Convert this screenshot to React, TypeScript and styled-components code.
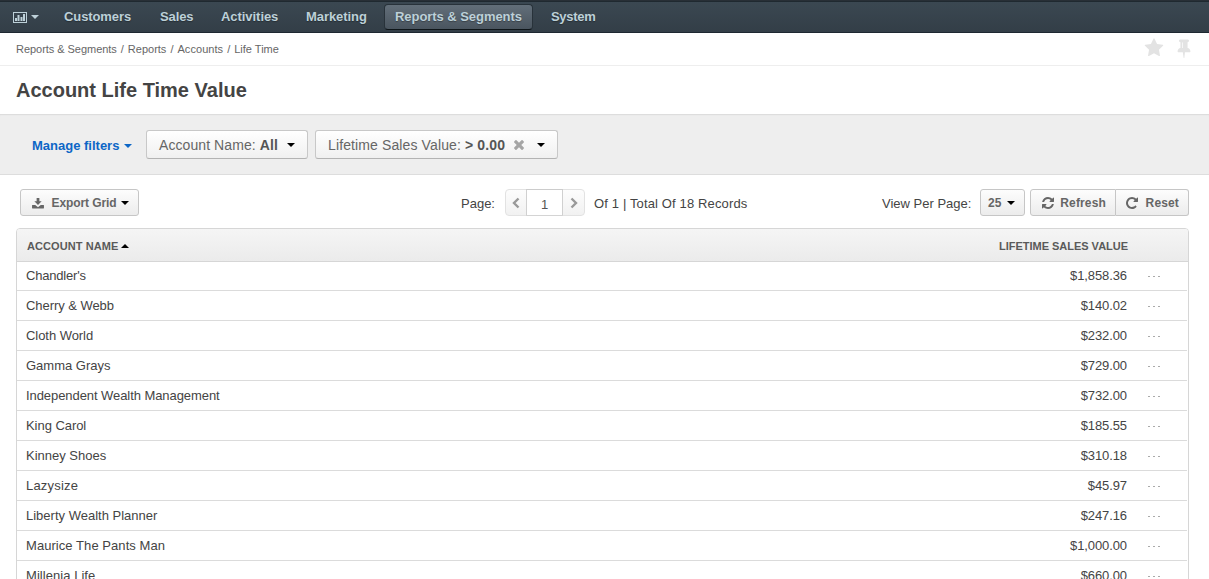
import React from "react";
import styled, { createGlobalStyle, css } from "styled-components";

const Global = createGlobalStyle`
  *{box-sizing:border-box}
  html,body{margin:0;padding:0;background:#fff}
  body{height:579px;overflow:hidden;font:13px/18px "Liberation Sans",Arial,sans-serif;color:#444}
`;

const Page = styled.div`
  width: 1209px;
  height: 579px;
  overflow: hidden;
`;

const Text = styled.span<{ $ls?: number }>`
  white-space: nowrap;
  letter-spacing: ${(p) => p.$ls ?? 0}px;
`;

const NavBar = styled.nav`
  height: 33px;
  padding: 1px 0 0 13px;
  display: flex;
  align-items: flex-start;
  background: linear-gradient(#3b4852, #333e47);
  border-top: 1px solid #282f36;
  border-bottom: 1px solid #1e2831;
  box-shadow: inset 0 1px 0 #1f2930;
`;

const ChartMenu = styled.div`
  display: flex;
  align-items: center;
  gap: 4px;
  width: 41px;
  height: 30px;
  color: #bdd0d8;
`;

const NavItem = styled.a<{ $w: number; $ls?: number; $active?: boolean }>`
  flex: none;
  width: ${(p) => p.$w}px;
  height: 26px;
  margin-top: 2px;
  padding-left: 9px;
  border: 1px solid transparent;
  border-radius: 4px;
  font-weight: bold;
  line-height: 23px;
  letter-spacing: ${(p) => p.$ls ?? 0}px;
  white-space: nowrap;
  color: #bdd0d8;
  text-shadow: 0 1px 1px rgba(0, 0, 0, 0.3);
  ${(p) =>
    p.$active &&
    css`
      margin-left: -1px;
      margin-right: 8px;
      padding-left: 10px;
      background: linear-gradient(#626e79, #4a555f);
      border-color: #28323a;
      border-bottom-color: #0e1519;
    `}
`;

const Breadcrumbs = styled.div`
  height: 33px;
  padding: 0 15px 0 16px;
  display: flex;
  align-items: center;
  justify-content: space-between;
  border-bottom: 1px solid #eee;
  font-size: 11px;
  color: #666;
`;

const Trail = styled.div`
  display: flex;
  gap: 4px;
  white-space: nowrap;
`;

const PageActions = styled.div`
  display: flex;
  align-items: center;
  gap: 10px;
  padding-bottom: 2px;
  color: #e3e3e3;
`;

const Title = styled.h1`
  margin: 0;
  height: 49px;
  padding: 0 16px;
  font-size: 20px;
  line-height: 49px;
  color: #444;
  border-bottom: 1px solid #ddd;
`;

const FilterBar = styled.div`
  height: 60px;
  padding: 15px 0 0 32px;
  display: flex;
  background: #eee;
  border-bottom: 1px solid #ddd;
  box-shadow: inset 0 1px 2px -1px rgba(0, 0, 0, 0.06);
`;

const ManageFilters = styled.a`
  width: 114px;
  display: flex;
  align-items: center;
  gap: 5px;
  height: 31px;
  padding-top: 1px;
  font-weight: bold;
  color: #0c66c6;
`;

const FilterButton = styled.button<{ $w: number }>`
  width: ${(p) => p.$w}px;
  height: 29px;
  margin-right: 7px;
  padding: 1px 12px 0;
  display: flex;
  align-items: center;
  font: 14px/17px "Liberation Sans", Arial, sans-serif;
  color: #666;
  background: linear-gradient(#fff, #f0f0f0);
  border: 1px solid #c8c8c8;
  border-bottom-color: #b3b3b3;
  border-radius: 3px;
  b {
    color: #555;
  }
`;

const ClearMark = styled.span`
  display: flex;
  margin-left: auto;
  color: #a5a5a5;
`;

const Caret = styled.i<{ $up?: boolean; $dark?: boolean; $ml?: string }>`
  width: 0;
  height: 0;
  flex: none;
  margin-left: ${(p) => p.$ml ?? 0};
  border: 4px solid transparent;
  ${(p) =>
    p.$up
      ? css`
          border-top: 0;
          border-bottom-color: #000;
        `
      : css`
          border-bottom: 0;
          border-top-color: ${p.$dark ? "#000" : "currentColor"};
        `}
`;

const Toolbar = styled.div`
  height: 53px;
  padding: 14px 20px 0;
  display: grid;
  grid-template-columns: 441px 421px 1fr;
`;

const Group = styled.div`
  display: flex;
  height: 27px;
`;

const Button = styled.button<{ $w: number; $pad?: number; $join?: "left" | "right" }>`
  width: ${(p) => p.$w}px;
  height: 27px;
  flex: none;
  padding: 1px ${(p) => p.$pad ?? 9}px 0 11px;
  display: flex;
  align-items: center;
  justify-content: space-between;
  font: bold 12px "Liberation Sans", Arial, sans-serif;
  color: #666;
  background: linear-gradient(#fdfdfd, #ececec);
  border: 1px solid #c6c6c6;
  border-radius: ${(p) =>
    p.$join === "left" ? "3px 0 0 3px" : p.$join === "right" ? "0 3px 3px 0" : "3px"};
  ${(p) => p.$join === "right" && "border-left: 0; padding-left: 10px;"}
  & > svg {
    flex: none;
  }
`;

const SizeButton = styled(Button)`
  padding-left: 7px;
`;

const Label = styled.span<{ $w?: number; $ls?: number }>`
  width: ${(p) => (p.$w ? p.$w + "px" : "auto")};
  flex: none;
  line-height: 29px;
  letter-spacing: ${(p) => p.$ls ?? 0}px;
  white-space: nowrap;
`;

const Pager = styled.div`
  width: 80px;
  height: 27px;
  margin-right: 9px;
  display: grid;
  grid-template-columns: 20px 37px 21px;
  grid-template-rows: 25px;
  border: 1px solid #e2e2e2;
  border-radius: 4px;
  background: linear-gradient(#fdfdfd, #f1f1f1);
`;

const PageArrow = styled.span`
  display: flex;
  align-items: center;
  justify-content: center;
  padding-top: 1px;
  color: #999;
`;

const PageNumber = styled.span`
  background: #fff;
  border: solid #d0d0d0;
  border-width: 0 1px;
  text-align: center;
  line-height: 29px;
  box-shadow: 0 -1px 0 #ccc, 0 1px 0 #d4d4d4;
  color: #555;
`;

const Grid = styled.div`
  width: 1173px;
  height: 400px;
  margin-left: 16px;
  border: 1px solid #d6d6d6;
  border-radius: 4px 4px 0 0;
`;

const GridHead = styled.div`
  height: 33px;
  padding: 1px 60px 0 10px;
  display: flex;
  align-items: center;
  justify-content: space-between;
  background: linear-gradient(#f5f5f5, #ebebeb);
  border-bottom: 1px solid #d6d6d6;
  border-radius: 3px 3px 0 0;
  font-size: 11px;
  font-weight: bold;
  color: #5a5a5a;
`;

const HeadCell = styled.div`
  display: flex;
  align-items: center;
  gap: 3px;
`;

const Row = styled.div`
  height: 30px;
  margin-right: 1px;
  padding: 1px 0 0 9px;
  display: grid;
  grid-template-columns: 901px 200px 1fr;
  line-height: 28px;
  border-bottom: 1px solid #dbdbdb;
  &:nth-child(2) {
    height: 29px;
    padding-top: 0;
  }
`;

const Amount = styled.span`
  text-align: right;
  letter-spacing: -0.1px;
`;

const Dots = styled.span`
  display: flex;
  gap: 3px;
  padding: 14px 0 0 21px;
  i {
    width: 2px;
    height: 1px;
    background: #aaa;
  }
`;

const FA = {
  times:
    "M1298 1322q0 40-28 68l-136 136q-28 28-68 28t-68-28l-294-294-294 294q-28 28-68 28t-68-28l-136-136q-28-28-28-68t28-68l294-294-294-294q-28-28-28-68t28-68l136-136q28-28 68-28t68 28l294 294 294-294q28-28 68-28t68 28l136 136q28 28 28 68t-28 68l-294 294 294 294q28 28 28 68z",
  star: "M1728 647q0 22-26 48l-363 354 86 500q1 7 1 20 0 21-10.500 35.500t-30.500 14.500q-19 0-40-12l-449-236-449 236q-22 12-40 12-21 0-31.500-14.500t-10.500-35.500q0-6 2-20l86-500-364-354q-25-27-25-48 0-37 56-46l502-73 225-455q19-41 49-41t49 41l225 455 502 73q56 9 56 46z",
  refresh:
    "M1639 1056q0 5-1 7-64 268-268 434.500t-478 166.500q-146 0-282.500-55t-243.500-157l-129 129q-19 19-45 19t-45-19-19-45v-448q0-26 19-45t45-19h448q26 0 45 19t19 45-19 45l-137 137q71 66 161 102t187 36q134 0 250-65t186-179q11-17 53-117 8-23 30-23h192q13 0 22.500 9.500t9.500 22.500zm25-800v448q0 26-19 45t-45 19h-448q-26 0-45-19t-19-45 19-45l138-138q-148-137-349-137-134 0-250 65t-186 179q-11 17-53 117-8 23-30 23h-199q-13 0-22.500-9.500t-9.500-22.500v-7q65-268 270-434.500t480-166.500q146 0 284 55.500t245 156.500l130-129q19-19 45-19t45 19 19 45z",
  repeat:
    "M1664 256v448q0 26-19 45t-45 19h-448q-42 0-59-40-17-39 14-69l138-138q-148-137-349-137-104 0-198.500 40.500t-163.500 109.500-109.500 163.500-40.500 198.500 40.500 198.500 109.500 163.500 163.500 109.500 198.500 40.500q119 0 225-52t179-147q7-10 23-12 15 0 25 9l137 138q9 8 9.500 20.500t-7.500 22.500q-109 132-264 204.500t-327 72.500q-156 0-298-61t-245-164-164-245-61-298 61-298 164-245 245-164 298-61q147 0 284.500 55.500t244.500 156.500l130-129q29-31 70-14 39 17 39 59z",
  pin: "M800 864v-448q0-14-9-23t-23-9-23 9-9 23v448q0 14 9 23t23 9 23-9 9-23zm672 352q0 26-19 45t-45 19h-429l-51 483q-2 12-10.500 20.500t-20.500 8.500h-1q-27 0-32-27l-76-485h-404q-26 0-45-19t-19-45q0-123 78.500-221.500t177.500-98.500v-512q-52 0-90-38t-38-90 38-90 90-38h640q52 0 90 38t38 90-38 90-90 38v512q99 0 177.500 98.500t78.500 221.500z",
};

const boxes: Partial<Record<keyof typeof FA, string>> = {
  times: "110 366 1188 1188",
  refresh: "128 128 1536 1536",
  repeat: "128 128 1536 1536",
};

const Icon = ({ name, size }: { name: keyof typeof FA; size: number }) => (
  <svg width={size} height={size} viewBox={boxes[name] ?? "0 0 1792 1792"} fill="currentColor">
    <path d={FA[name]} />
  </svg>
);

const ChartIcon = () => (
  <svg width="14" height="11" viewBox="0 0 14 11" fill="currentColor">
    <path fillRule="evenodd" d="M0 0h14v11H0zM1 1v9h12V1z" />
    <path d="M2 6h2v3H2zM4.500 3h2v6h-2zM7.500 5h2v4h-2zM10 2h2v7h-2z" />
  </svg>
);

const DownloadIcon = () => (
  <svg width="12" height="11" viewBox="0 0 13 12" fill="currentColor">
    <path d="M5 0h3v3.500h2.500L6.500 7.500 2.500 3.500H5z" />
    <path d="M.5 7.500h3L6.500 10l3-2.500h3q.5 0 .5.500v3q0 .5-.5.500H.500Q0 11.500 0 11V8q0-.5.500-.5z" />
  </svg>
);

const Chevron = ({ right }: { right?: boolean }) => (
  <svg width="8" height="12" viewBox="0 0 8 12" fill="none" stroke="currentColor" strokeWidth="2.400">
    <path d={right ? "M1.500 1.500L6 6l-4.500 4.500" : "M6.500 1.500L2 6l4.500 4.500"} />
  </svg>
);

const rows: { name: string; value: string; tracking: number }[] = [
  { name: "Chandler's", value: "$1,858.36", tracking: -0.2 },
  { name: "Cherry & Webb", value: "$140.02", tracking: -0.05 },
  { name: "Cloth World", value: "$232.00", tracking: -0.05 },
  { name: "Gamma Grays", value: "$729.00", tracking: 0 },
  { name: "Independent Wealth Management", value: "$732.00", tracking: -0.07 },
  { name: "King Carol", value: "$185.55", tracking: -0.05 },
  { name: "Kinney Shoes", value: "$310.18", tracking: 0 },
  { name: "Lazysize", value: "$45.97", tracking: 0.2 },
  { name: "Liberty Wealth Planner", value: "$247.16", tracking: 0 },
  { name: "Maurice The Pants Man", value: "$1,000.00", tracking: 0.06 },
  { name: "Millenia Life", value: "$660.00", tracking: 0.05 },
];

export default function App() {
  return (
    <Page>
      <Global />
      <NavBar>
        <ChartMenu>
          <ChartIcon />
          <Caret />
        </ChartMenu>
        <NavItem $w={96} $ls={-0.1}>Customers</NavItem>
        <NavItem $w={61} $ls={-0.1}>Sales</NavItem>
        <NavItem $w={85} $ls={-0.05}>Activities</NavItem>
        <NavItem $w={89} $ls={-0.06}>Marketing</NavItem>
        <NavItem $w={149} $ls={-0.05} $active>
          Reports &amp; Segments
        </NavItem>
        <NavItem $w={70} $ls={-0.3}>System</NavItem>
      </NavBar>
      <Breadcrumbs>
        <Trail>
          <Text $ls={-0.04}>Reports &amp; Segments</Text>
          <span>/</span>
          <Text>Reports</Text>
          <span>/</span>
          <Text $ls={0.06}>Accounts</Text>
          <span>/</span>
          <Text>Life Time</Text>
        </Trail>
        <PageActions>
          <Icon name="star" size={20} />
          <Icon name="pin" size={20} />
        </PageActions>
      </Breadcrumbs>
      <Title>
        <Text>Account Life Time Value</Text>
      </Title>
      <FilterBar>
        <ManageFilters>
          <Text>Manage filters</Text>
          <Caret />
        </ManageFilters>
        <FilterButton $w={162}>
          <Text $ls={0.08}>
            Account Name: <b>All</b>
          </Text>
          <Caret $dark $ml="auto" />
        </FilterButton>
        <FilterButton $w={243}>
          <Text $ls={0.12}>
            Lifetime Sales Value: <b>&gt; 0.00</b>
          </Text>
          <ClearMark>
            <Icon name="times" size={10} />
          </ClearMark>
          <Caret $dark $ml="13px" />
        </FilterButton>
      </FilterBar>
      <Toolbar>
        <Group>
          <Button $w={119}>
            <DownloadIcon />
            <Text $ls={-0.1}>Export Grid</Text>
            <Caret $dark $ml="-3px" />
          </Button>
        </Group>
        <Group>
          <Label $w={44}>Page:</Label>
          <Pager>
            <PageArrow>
              <Chevron />
            </PageArrow>
            <PageNumber>1</PageNumber>
            <PageArrow>
              <Chevron right />
            </PageArrow>
          </Pager>
          <Label $ls={0.14}>Of 1 | Total Of 18 Records</Label>
        </Group>
        <Group>
          <Label $w={98}>View Per Page:</Label>
          <SizeButton $w={45}>
            25
            <Caret $dark />
          </SizeButton>
          <Label $w={5} />
          <Button $w={86} $join="left">
            <Icon name="refresh" size={12} />
            <Text $ls={0.15}>Refresh</Text>
          </Button>
          <Button $w={73} $join="right">
            <Icon name="repeat" size={12} />
            <Text $ls={0.15}>Reset</Text>
          </Button>
        </Group>
      </Toolbar>
      <Grid>
        <GridHead>
          <HeadCell>
            <Text $ls={0.08}>ACCOUNT NAME</Text>
            <Caret $up />
          </HeadCell>
          <Text $ls={-0.02}>LIFETIME SALES VALUE</Text>
        </GridHead>
        {rows.map(({ name, value, tracking }) => (
          <Row key={name}>
            <Text $ls={tracking}>{name}</Text>
            <Amount>{value}</Amount>
            <Dots>
              <i />
              <i />
              <i />
            </Dots>
          </Row>
        ))}
      </Grid>
    </Page>
  );
}
